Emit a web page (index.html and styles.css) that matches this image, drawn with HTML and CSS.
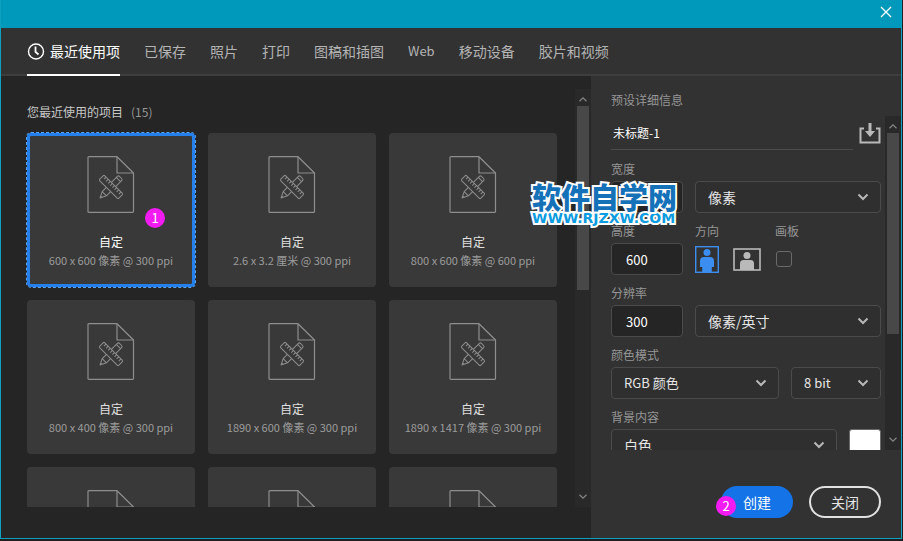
FILE: index.html
```html
<!DOCTYPE html>
<html lang="zh-CN">
<head>
<meta charset="utf-8">
<title>新建文档</title>
<link rel="stylesheet" href="styles.css">
</head>
<body>
<svg class="sprite" aria-hidden="true">
  <symbol id="doc" viewBox="0 0 48 57">
    <g fill="none" stroke="#8e8e8e" stroke-linejoin="round">
      <path d="M1 1.500q0-.8.8-.8H30L46.500 17v38.500q0 .8-.8.8H1.800q-.8 0-.8-.8z" stroke-width="1.200"/>
      <path d="M30 1v16h16.500" stroke-width="1.200"/>
      <g transform="translate(24 31)">
        <path transform="rotate(-45)" d="M-9.500-3H12q1.500 0 1.500 1.500v3Q13.500 3 12 3H-9.500L-15.500 0zM-9.500-3v6M10.500-3v6M-13.500-1v2"/>
        <g transform="rotate(45)">
          <rect x="-13.500" y="-3.500" width="27" height="7" rx="1.200" fill="#393939"/>
          <path d="M-10.500-3.500v3M-7.500-3.500v3M-4.500-3.500v3M-1.500-3.500v3M1.500-3.500v3M4.500-3.500v3M7.500-3.500v3M10.500-3.500v3"/>
        </g>
      </g>
    </g>
  </symbol>
  <symbol id="chevron" viewBox="0 0 12 8"><path d="M1.500 1.500 6 6l4.500-4.500" fill="none" stroke="#b8b8b8" stroke-width="2"/></symbol>
  <symbol id="up" viewBox="0 0 8 5"><path d="M.5 4.300 4 .9l3.500 3.400" fill="none" stroke="#858585" stroke-width="1.200"/></symbol>
  <symbol id="down" viewBox="0 0 8 5"><path d="M.5.7 4 4.100 7.500.7" fill="none" stroke="#858585" stroke-width="1.200"/></symbol>
</svg>
<div class="dialog">
  <header class="titlebar">
    <button class="close" aria-label="关闭窗口"><svg width="12" height="12" viewBox="0 0 12 12"><path d="M1 1l10 10M11 1 1 11" stroke="#fff" stroke-width="1.300"/></svg></button>
  </header>
  <nav class="tabs">
    <a class="tab active" href="#recent"><svg width="18" height="18" viewBox="0 0 18 18" fill="none" stroke="#fff"><circle cx="9" cy="9.500" r="7.500" stroke-width="1.400"/><path d="M8.500 4.500v5.300l3 2.700" stroke-width="1.800"/></svg>最近使用项</a>
    <a class="tab" href="#saved">已保存</a>
    <a class="tab" href="#photo">照片</a>
    <a class="tab" href="#print">打印</a>
    <a class="tab" href="#art">图稿和插图</a>
    <a class="tab latin" href="#web">Web</a>
    <a class="tab" href="#mobile">移动设备</a>
    <a class="tab" href="#film">胶片和视频</a>
  </nav>
  <main class="main">
    <section class="recent">
      <div class="presets">
        <h2 class="heading">您最近使用的项目<span class="count">(15)</span></h2>
        <div class="cards">
          <button class="card selected"><svg class="doc"><use href="#doc"/></svg><span class="name">自定</span><span class="size">600 x 600 像素 @ 300 ppi</span><span class="badge badge-card">1</span></button>
          <button class="card"><svg class="doc"><use href="#doc"/></svg><span class="name">自定</span><span class="size">2.6 x 3.2 厘米 @ 300 ppi</span></button>
          <button class="card"><svg class="doc"><use href="#doc"/></svg><span class="name">自定</span><span class="size">800 x 600 像素 @ 600 ppi</span></button>
          <button class="card"><svg class="doc"><use href="#doc"/></svg><span class="name">自定</span><span class="size">800 x 400 像素 @ 300 ppi</span></button>
          <button class="card"><svg class="doc"><use href="#doc"/></svg><span class="name">自定</span><span class="size">1890 x 600 像素 @ 300 ppi</span></button>
          <button class="card"><svg class="doc"><use href="#doc"/></svg><span class="name">自定</span><span class="size">1890 x 1417 像素 @ 300 ppi</span></button>
          <button class="card"><svg class="doc"><use href="#doc"/></svg></button>
          <button class="card"><svg class="doc"><use href="#doc"/></svg></button>
          <button class="card"><svg class="doc"><use href="#doc"/></svg></button>
        </div>
      </div>
      <div class="scrollbar">
        <svg class="arrow"><use href="#up"/></svg>
        <div class="track"><div class="thumb thumb-presets"></div></div>
        <svg class="arrow"><use href="#down"/></svg>
      </div>
    </section>
    <aside class="details">
      <h2 class="details-title">预设详细信息</h2>
      <div class="scroller">
        <form class="form">
          <div class="title-row">
            <input class="doc-name" type="text" value="未标题-1" aria-label="文档名称">
            <button class="save" type="button" aria-label="存储预设"><svg width="22" height="21" viewBox="0 0 22 21"><path d="M5 5.500H1.500v14h19v-14H17" fill="none" stroke="#b9b9b9" stroke-width="2"/><path d="M9.500 0h3v8H16l-5 6-5-6h3.500z" fill="#b9b9b9"/></svg></button>
          </div>
          <div class="row">
            <div class="field small"><label for="w">宽度</label><input class="box" id="w" type="text"></div>
            <div class="field grow"><label for="unit" class="blank" aria-label="宽度单位"></label><div class="select"><select id="unit"><option>像素</option></select><svg class="chev"><use href="#chevron"/></svg></div></div>
          </div>
          <div class="row">
            <div class="field small"><label for="h">高度</label><input class="box" id="h" type="text" value="600"></div>
            <div class="field orient"><span class="label">方向</span>
              <div class="icons">
                <button type="button" class="plain" aria-label="纵向"><svg width="24" height="27" viewBox="0 0 24 27" fill="#3b8ef0"><rect x=".7" y=".7" width="22.600" height="25.600" fill="none" stroke="#3b8ef0" stroke-width="1.400"/><circle cx="12" cy="6.500" r="3.500"/><path d="M9 11h6q4 0 4 4v6h-2.200v5H7.200v-5H5v-6q0-4 4-4z"/></svg></button>
                <button type="button" class="plain" aria-label="横向"><svg width="28" height="23" viewBox="0 0 28 23" fill="#b9b9b9"><rect x="1" y="1" width="26" height="21" fill="none" stroke="#b9b9b9" stroke-width="1.600"/><circle cx="14" cy="7.500" r="3.500"/><path d="M10.500 12h7q3.500 0 3.500 3.500V22H7v-6.500Q7 12 10.500 12z"/></svg></button>
              </div>
            </div>
            <div class="field"><label for="artboard">画板</label><div class="icons"><input class="check" id="artboard" type="checkbox"></div></div>
          </div>
          <div class="row">
            <div class="field small"><label for="res">分辨率</label><input class="box" id="res" type="text" value="300"></div>
            <div class="field grow"><label for="resunit" class="blank" aria-label="分辨率单位"></label><div class="select"><select id="resunit"><option>像素/英寸</option></select><svg class="chev"><use href="#chevron"/></svg></div></div>
          </div>
          <div class="row">
            <div class="field grow"><label for="mode">颜色模式</label><div class="select"><select class="latin" id="mode"><option>RGB 颜色</option></select><svg class="chev"><use href="#chevron"/></svg></div></div>
            <div class="field depth"><label for="depth" class="blank" aria-label="位深度"></label><div class="select"><select class="latin" id="depth"><option>8 bit</option></select><svg class="chev"><use href="#chevron"/></svg></div></div>
          </div>
          <div class="row">
            <div class="field grow"><label for="bg">背景内容</label><div class="select"><select id="bg"><option>白色</option></select><svg class="chev"><use href="#chevron"/></svg></div></div>
            <div class="field"><span class="label"></span><button type="button" class="swatch" aria-label="背景颜色"></button></div>
          </div>
        </form>
        <div class="scrollbar">
          <svg class="arrow"><use href="#up"/></svg>
          <div class="track"><div class="thumb thumb-details"></div></div>
          <svg class="arrow"><use href="#down"/></svg>
        </div>
      </div>
      <footer class="actions">
        <button class="pill primary">创建<span class="badge badge-button">2</span></button>
        <button class="pill">关闭</button>
      </footer>
      <div class="watermark"><span class="mark-name">软件自学网</span><span class="mark-url">WWW.RJZXW.COM</span></div>
    </aside>
  </main>
</div>
</body>
</html>
```
FILE: styles.css
```css
* { box-sizing: border-box; }

body {
  margin: 0;
  height: 100vh;
  padding: 0 1px 2px 0;
  background: #1f1f1f;
  color: #e6e6e6;
  font: 14px/20px "Noto Sans CJK SC", sans-serif;
  overflow: hidden;
}

button, input, select { font: inherit; color: inherit; }
button { padding: 0; border: 0; background: none; }
svg { display: block; }
.sprite { position: absolute; width: 0; height: 0; }

.dialog {
  height: 100%;
  display: flex;
  flex-direction: column;
  border: 1px solid #0f9fbf;
  border-top: 0;
  background: #252525;
}

.titlebar {
  flex: none;
  height: 28px;
  display: flex;
  justify-content: flex-end;
  align-items: center;
  padding: 0 9px 4px 0;
  background: #0099bc;
}

.tabs {
  flex: none;
  height: 48px;
  display: flex;
  gap: 24px;
  padding-left: 26px;
  background: #323232;
  box-shadow: inset 0 -2px #3e3e3e;
}

.tab {
  display: flex;
  align-items: center;
  gap: 5px;
  border-bottom: 2px solid transparent;
  color: #b4b4b4;
  text-decoration: none;
}

.tab.active { color: #fff; border-color: #fff; }
.latin { font-size: 13px; }

.main {
  flex: 1;
  min-height: 0;
  display: grid;
  grid-template-columns: 1fr 310px;
  grid-template-rows: 100%;
}

.recent {
  display: flex;
  gap: 18px;
  padding: 13px 0 31px 25px;
  min-height: 0;
}

.presets { flex: 1; overflow: hidden; padding-left: 1px; }

.heading {
  display: flex;
  gap: 8px;
  margin: 0;
  padding: 13px 0 11px;
  font-size: 12px;
  font-weight: 400;
  color: #c8c8c8;
}

.count { color: #969696; }

.cards {
  display: grid;
  grid-template-columns: repeat(3, 1fr);
  gap: 13px;
  padding-right: 1px;
  margin-right: -1px;
}

.card {
  position: relative;
  min-height: 154px;
  display: flex;
  flex-direction: column;
  align-items: center;
  justify-content: flex-start;
  padding-top: 23px;
  border-radius: 4px;
  background: #393939;
  font-size: 12px;
  line-height: 18px;
}

.card.selected {
  box-shadow: inset 0 0 0 3px #2680eb;
  outline: 1px dashed #5aa2f5;
}

.doc { width: 48px; height: 57px; margin-bottom: 20px; }
.name { color: #e0e0e0; }
.selected .name { color: #fff; }
.size { color: #9c9c9c; font-size: 11px; }

.scrollbar {
  flex: none;
  width: 16px;
  display: flex;
  flex-direction: column;
  align-items: center;
  padding: 8px 0;
  background: #292929;
}

.arrow { width: 8px; height: 5px; }
.track { flex: 1; width: 12px; padding: 4px 0; }
.thumb { background: #484848; }
.thumb-presets { height: 48%; }
.thumb-details { height: 67%; }

.details {
  position: relative;
  display: flex;
  flex-direction: column;
  min-height: 0;
  background: #323232;
}

.details-title {
  flex: none;
  margin: 0;
  height: 40px;
  padding: 14px 20px 0;
  font-size: 12px;
  font-weight: 400;
  color: #969696;
}

.scroller {
  flex: 1;
  min-height: 0;
  display: flex;
  gap: 4px;
  overflow: hidden;
  padding-left: 20px;
}

.form { flex: 1; min-width: 0; }

.title-row {
  display: flex;
  align-items: center;
  gap: 6px;
  margin-bottom: 1px;
}

.doc-name {
  flex: 1;
  min-width: 0;
  height: 34px;
  padding: 0 2px;
  border: 0;
  border-bottom: 1px solid #4b4b4b;
  background: none;
  color: #fff;
  font-size: 12px;
}

.row { display: flex; gap: 12px; }
.field { display: flex; flex-direction: column; }
.small { width: 72px; }
.grow { flex: 1; }
.depth { width: 90px; }
.orient { width: 68px; }

label, .label {
  height: 30px;
  padding-top: 10px;
  font-size: 12px;
  line-height: 16px;
  color: #969696;
}

.box, select {
  width: 100%;
  height: 32px;
  border: 1px solid #4b4b4b;
  border-radius: 4px;
}

.box {
  padding: 0 14px;
  background: #252525;
  color: #fff;
  font-size: 13px;
}

.select { display: grid; align-items: center; }
.select > * { grid-area: 1 / 1; }

select {
  appearance: none;
  padding: 0 12px;
  background: #2f2f2f;
}

select.latin { font-size: 13px; }

.chev {
  justify-self: end;
  width: 12px;
  height: 8px;
  margin-right: 12px;
  pointer-events: none;
}

.icons { height: 32px; display: flex; align-items: center; gap: 14px; }
.plain { flex: none; }

.check {
  appearance: none;
  width: 16px;
  height: 16px;
  margin: 0 1px;
  border: 1px solid #6a6a6a;
  border-radius: 3px;
}

.swatch {
  width: 32px;
  height: 32px;
  border: 1px solid #6a6a6a;
  border-radius: 3px;
  background: #fff;
}

.actions {
  flex: none;
  height: 88px;
  display: flex;
  justify-content: flex-end;
  align-items: center;
  gap: 16px;
  padding: 16px 20px 0;
}

.pill {
  position: relative;
  width: 72px;
  height: 32px;
  border-radius: 16px;
  box-shadow: inset 0 0 0 2px #e1e1e1;
}

.pill.primary { background: #1473e6; box-shadow: none; color: #fff; }

.badge {
  position: absolute;
  width: 20px;
  height: 20px;
  border-radius: 50%;
  background: #f21bf2;
  color: #fff;
  font-size: 13px;
  line-height: 19px;
  text-align: center;
}

.badge-card { left: 118px; top: 75px; }
.badge-button { left: -5px; top: 10px; }

.watermark {
  position: absolute;
  left: -59px;
  top: 105px;
  display: flex;
  flex-direction: column;
  white-space: nowrap;
  pointer-events: none;
  paint-order: stroke fill;
  -webkit-text-stroke: 4px #fff;
}

.mark-name {
  z-index: 1;
  color: #1572b9;
  font-size: 29px;
  font-weight: 900;
  line-height: 30px;
}

.mark-url {
  color: #0a9be0;
  font: 700 14px/14px "DejaVu Sans", sans-serif;
}
```
